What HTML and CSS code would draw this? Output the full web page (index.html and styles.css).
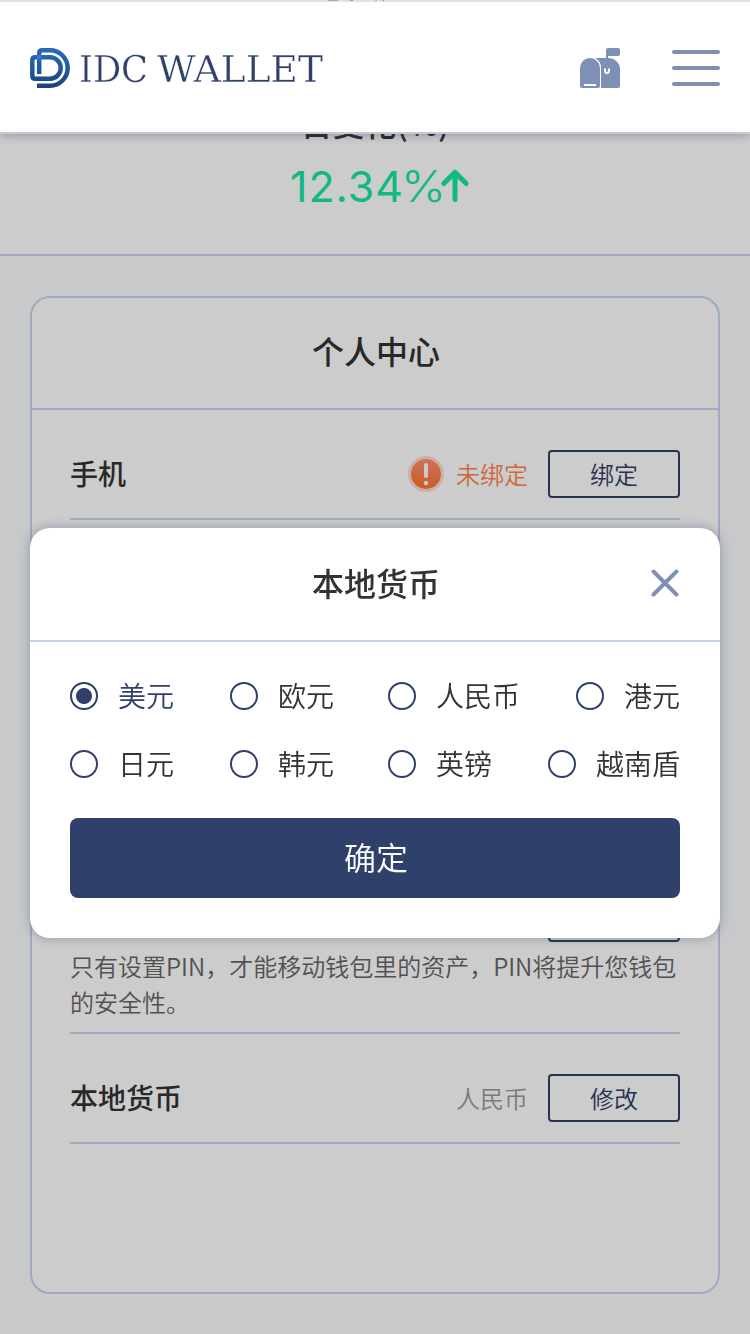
FILE: index.html
```html
<!DOCTYPE html>
<html lang="zh-CN">
<head>
<meta charset="utf-8">
<title>IDC WALLET</title>
<link rel="stylesheet" href="styles.css">
</head>
<body>
<main class="page">
  <section class="stat">
    <p class="stat-label">日变化(%)</p>
    <div class="stat-value"><svg width="180" height="64" viewBox="0 -10 180 64"><text class="digits" x="-1" y="37" textLength="113" lengthAdjust="spacing">12.34</text><text class="percent" x="110" y="37" textLength="45" lengthAdjust="spacingAndGlyphs">%</text><path class="arrow" d="M164 34.500V8M152.800 18.500 164 7.400l11.200 11.100"/></svg></div>
  </section>
  <section class="card">
    <h2 class="card-title">个人中心</h2>
    <div class="rows">
      <div class="row">
        <span class="row-name">手机</span>
        <svg class="warn" width="36" height="36" viewBox="0 0 36 36"><defs><linearGradient id="w" x2="0" y2="1"><stop offset="0" stop-color="#ff9270"/><stop offset="1" stop-color="#ff702f"/></linearGradient></defs><circle cx="18" cy="18" r="18" fill="#ff9068" opacity=".3"/><circle cx="18" cy="18" r="15" fill="url(#w)"/><path d="M18 9v11" stroke="#fff" stroke-width="4" stroke-linecap="round"/><circle cx="18" cy="27" r="2.200" fill="#fff"/></svg>
        <span class="status status-warn">未绑定</span>
        <button class="action">绑定</button>
      </div>
      <div class="row row-pin">
        <div class="row-line"><span class="row-name">PIN</span><button class="action">设置</button></div>
        <p class="hint">只有设置PIN，才能移动钱包里的资产，PIN将提升您钱包的安全性。</p>
      </div>
      <div class="row">
        <span class="row-name">本地货币</span>
        <span class="status">人民币</span>
        <button class="action">修改</button>
      </div>
    </div>
  </section>
</main>
<div class="mask"></div>
<header class="header">
  <svg class="logo" width="300" height="60" viewBox="0 -10 300 60"><defs><linearGradient id="g" gradientUnits="userSpaceOnUse" x1="0" y1="0" x2="0" y2="40"><stop offset="0" stop-color="#2869bd"/><stop offset=".5" stop-color="#2259a0"/><stop offset="1" stop-color="#1c427b"/></linearGradient></defs>
    <g fill="none" stroke="url(#g)" stroke-width="4.500"><path d="M9.200 26V5.300q0-3 3-3H20a17.700 17.700 0 0 1 0 35.400H7"/><path d="M7 9.300H5.300q-3 0-3 3v15.400q0 3 3 3H20a10.700 10.700 0 0 0 0-21.400H7"/></g>
    <rect x="7" y="7" width="4.500" height="4.500" fill="#3a75d4"/>
    <text class="wordmark" x="49" y="33.500" textLength="69" lengthAdjust="spacingAndGlyphs">IDC</text>
    <text class="wordmark" x="127" y="33.500" textLength="166" lengthAdjust="spacingAndGlyphs">WALLET</text>
  </svg>
  <svg class="mail" width="40" height="40" viewBox="0 0 40 40"><path fill="#7f90b7" d="M0 20a10 10 0 0 1 20 0v18q0 2-2 2H2q-2 0-2-2z"/><path fill="#7f90b7" d="M15 10h11V2q0-2 2-2h10q2 0 2 2v4q0 2-2 2H28v2a12 11 0 0 1 12 11v17q0 2-2 2H21V20q0-7-6-10z"/><path d="M4 37h12M25 20.500v2a2 2.500 0 0 0 4 0v-2" fill="none" stroke="#fff" stroke-width="2"/></svg>
  <svg class="menu" width="48" height="36" viewBox="0 0 48 36"><path d="M2 2h44M2 18h44M2 34h44" stroke="#7f90b7" stroke-width="4" stroke-linecap="round"/></svg>
</header>
<div class="modal">
  <div class="modal-head"><h2>本地货币</h2><svg class="close" width="28" height="28" viewBox="0 0 28 28"><path d="M2.500 2.500l23 23M25.500 2.500l-23 23" stroke="#7f90b7" stroke-width="4" stroke-linecap="round"/></svg></div>
  <div class="options">
    <label class="option selected"><i class="radio"></i><span>美元</span></label>
    <label class="option"><i class="radio"></i><span>欧元</span></label>
    <label class="option"><i class="radio"></i><span>人民币</span></label>
    <label class="option last"><i class="radio"></i><span>港元</span></label>
    <label class="option"><i class="radio"></i><span>日元</span></label>
    <label class="option"><i class="radio"></i><span>韩元</span></label>
    <label class="option"><i class="radio"></i><span>英镑</span></label>
    <label class="option last"><i class="radio"></i><span>越南盾</span></label>
  </div>
  <button class="confirm">确定</button>
</div>
</body>
</html>
```
FILE: styles.css
```css
* { box-sizing: border-box; }
html, body { margin: 0; height: 1334px; overflow: hidden; }
body { background: #fafcfe; color: #333; font-family: "Noto Sans CJK SC", sans-serif; font-weight: 350; }
h2, p { margin: 0; }
svg { display: block; flex: none; }
button { font: inherit; padding: 0; background: none; }

.page { height: 1334px; overflow: hidden; }
.stat { height: 256px; padding-top: 98px; background: #fff; border-bottom: 2px solid #c8d5ee; }
.stat-label { font-size: 32px; line-height: 48px; font-weight: 500; text-align: center; }
.stat-value { display: flex; justify-content: center; padding: 9px 0 0 11px; }
.digits, .percent { font-family: Inter, sans-serif; font-size: 43px; fill: #15e7a4; }
.digits { font-weight: 400; }
.percent { font-weight: 300; }
.arrow { fill: none; stroke: #15e7a4; stroke-width: 5; stroke-linecap: round; stroke-linejoin: round; }

.card { margin: 40px 30px 0; height: 998px; background: #fff; border: 2px solid #c8d5ee; border-radius: 20px; }
.card-title { height: 112px; padding-left: 2px; line-height: 105px; border-bottom: 2px solid #c8d5ee; font-size: 32px; font-weight: 500; text-align: center; }
.rows { padding: 0 38px; }
.row { height: 110px; padding-top: 20px; display: flex; align-items: center; border-bottom: 2px solid #c8d5ee; }
.row-name { margin-right: auto; padding-bottom: 2px; font-size: 28px; font-weight: 500; line-height: 42px; }
.warn { margin-right: 12px; }
.status { margin-right: 20px; font-size: 24px; line-height: 36px; color: #999; }
.status-warn { color: #ff844d; }
.action { width: 132px; height: 48px; border: 2px solid #2f406b; border-radius: 4px; color: #2f406b; font-size: 24px; line-height: 44px; }
.row-pin { height: 514px; padding: 0 0 12px; flex-direction: column; align-items: stretch; justify-content: flex-end; }
.row-line { display: flex; align-items: center; margin-bottom: 6px; }
.hint { font-size: 24px; line-height: 36px; color: #666; }

.mask { position: fixed; inset: 0; background: rgba(0, 0, 0, .2); }

.header { position: fixed; left: 0; right: 0; top: 2px; height: 130px; padding: 2px 30px 0; display: flex; align-items: center; background: #fff; box-shadow: 0 2px 0 #c9c9cb, 0 2px 10px rgba(47, 64, 107, .5); }
.header::before { content: ""; position: absolute; left: 0; right: 0; top: -2px; height: 2px; background: linear-gradient(#aab, #aab) 328px 0 / 10px 1px no-repeat, linear-gradient(#99a, #99a) 350px 0 / 3px 1px no-repeat, linear-gradient(#bbc, #bbc) 375px 0 / 2px 1px no-repeat, linear-gradient(#889, #889) 383px 0 / 1px 1px no-repeat, #dfe2e9; }
.wordmark { font-family: "DejaVu Serif", serif; font-size: 38px; fill: #2f406b; stroke: #fff; stroke-width: .35; }
.mail { margin-left: auto; margin-right: 52px; }

.modal { position: fixed; left: 30px; right: 30px; top: 528px; height: 410px; background: #fff; border-radius: 20px; box-shadow: 0 0 12px rgba(47, 64, 107, .4); }
.modal-head { height: 114px; padding: 0 41px 2px; display: grid; grid-template-columns: 28px 1fr 28px; align-items: center; border-bottom: 2px solid #c5d0e9; }
.modal-head h2 { grid-column: 2; padding: 0 0 2px 2px; font-size: 32px; line-height: 48px; font-weight: 500; text-align: center; }
.options { padding: 34px 40px 0; display: grid; grid-template-columns: 160px 158px 160px 132px; grid-template-rows: 40px 40px; row-gap: 28px; }
.option { display: flex; align-items: center; font-size: 28px; line-height: 38px; white-space: nowrap; }
.option span { padding-bottom: 2px; }
.option.selected { color: #2f406b; }
.option.last { justify-content: flex-end; }
.radio { width: 28px; height: 28px; margin-right: 20px; border: 2px solid #2f406b; border-radius: 50%; }
.selected .radio { background: radial-gradient(circle, #2f406b 7.500px, transparent 8.500px); }
.confirm { display: block; width: 610px; height: 80px; margin: 34px 40px 0; padding: 0 0 3px 2px; border: 0; border-radius: 8px; background: #2f406b; color: #fff; font-size: 32px; line-height: 77px; }
```
